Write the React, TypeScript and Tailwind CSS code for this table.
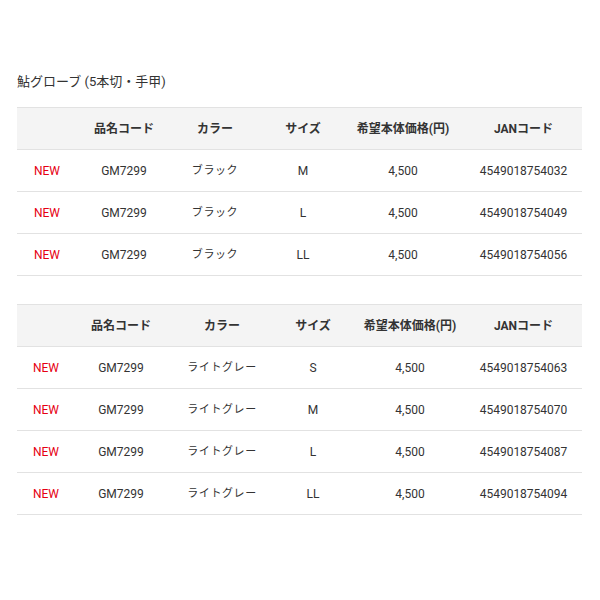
import React from "react";

const font = { fontFamily: 'Roboto, "Noto Sans CJK JP", sans-serif' };

type Row = { color: string; size: string; jan: string };

function Table({ rows, widths, janPad }: { rows: Row[]; widths: number[]; janPad: string }) {
  return (
    <table className="w-[565px] table-fixed border-collapse text-[12px] text-[#333]">
      <colgroup>
        {widths.map((w, i) => (
          <col key={i} style={{ width: w }} />
        ))}
      </colgroup>
      <thead>
        <tr className="bg-[#f4f4f4] border-t border-b border-[#e2e2e2]">
          <th className="h-[42px]"></th>
          <th className="font-bold">品名コード</th>
          <th className="font-bold">カラー</th>
          <th className="font-bold">サイズ</th>
          <th className="font-bold">希望本体価格(円)</th>
          <th className={"font-bold " + janPad}>JANコード</th>
        </tr>
      </thead>
      <tbody>
        {rows.map((r, i) => (
          <tr key={i} className="border-b border-[#e2e2e2] text-center">
            <td className="h-[42px] text-[#e60012]">NEW</td>
            <td>GM7299</td>
            <td className="pt-[2px] text-[11px] tracking-[0.6px] font-normal text-[#333]">{r.color}</td>
            <td>{r.size}</td>
            <td>4,500</td>
            <td className={janPad}>{r.jan}</td>
          </tr>
        ))}
      </tbody>
    </table>
  );
}

export default function App() {
  const t1: Row[] = [
    { color: "ブラック", size: "M", jan: "4549018754032" },
    { color: "ブラック", size: "L", jan: "4549018754049" },
    { color: "ブラック", size: "LL", jan: "4549018754056" },
  ];
  const t2: Row[] = [
    { color: "ライトグレー", size: "S", jan: "4549018754063" },
    { color: "ライトグレー", size: "M", jan: "4549018754070" },
    { color: "ライトグレー", size: "L", jan: "4549018754087" },
    { color: "ライトグレー", size: "LL", jan: "4549018754094" },
  ];
  return (
    <div className="w-[600px] h-[600px] bg-white pl-[17px] pt-[73px]" style={font}>
      <div className="text-[13px] text-[#333] leading-[18px]">鮎グローブ (5本切・手甲)</div>
      <div className="mt-[16px]">
        <Table rows={t1} widths={[60, 94, 88, 88, 112, 123]} janPad="pl-[6px]" />
      </div>
      <div className="mt-[28px]">
        <Table rows={t2} widths={[58, 92, 110, 72, 122, 111]} janPad="pr-[6px]" />
      </div>
    </div>
  );
}
